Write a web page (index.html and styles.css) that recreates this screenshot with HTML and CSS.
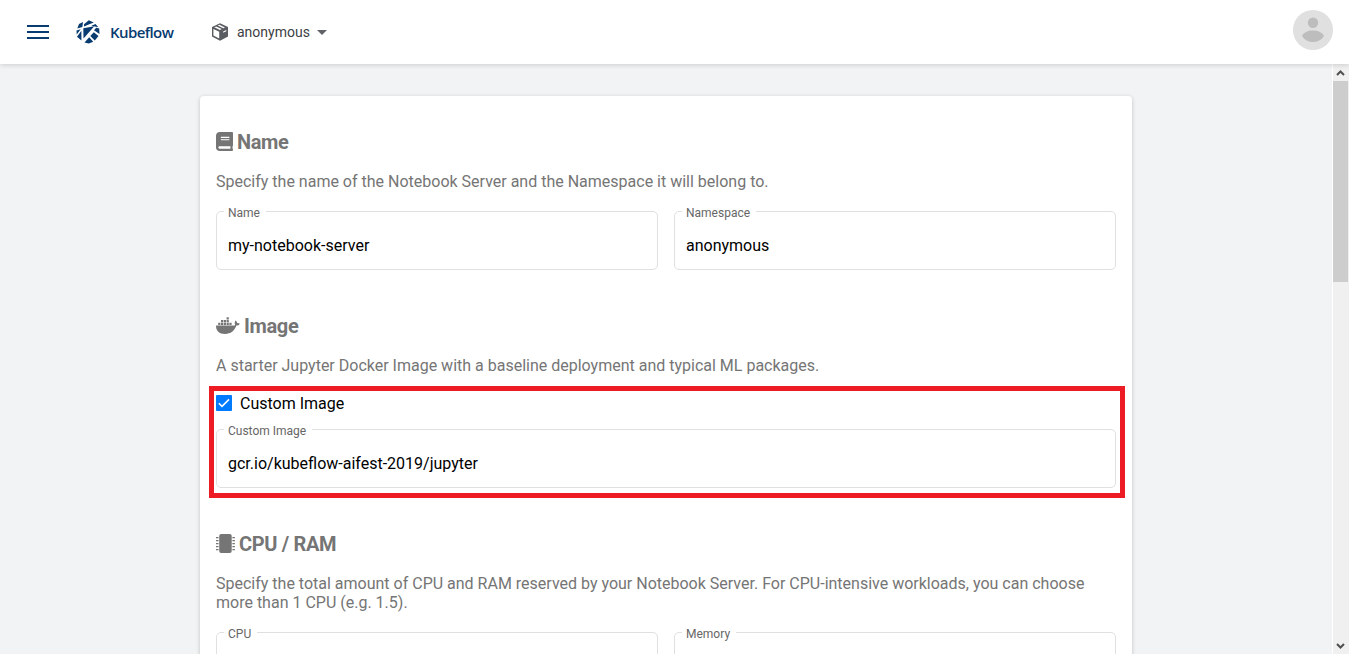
FILE: index.html
```html
<!DOCTYPE html>
<html lang="en">
<head>
<meta charset="utf-8">
<title>Kubeflow</title>
<link rel="stylesheet" href="styles.css">
</head>
<body>
<header class="topbar">
  <svg class="menu" width="22" height="16" viewBox="0 0 22 16" fill="#083b70"><path d="M0 1h22v2H0zM0 7h22v2H0zM0 13h22v2H0z"/></svg>
  <svg class="logo" width="24" height="24" viewBox="0 0 24 24">
    <path fill="#083b70" d="M8 4.200 12.800.300 17.800 2.600 13.300 4.200 8 6.500zM7 2l-.6 5L1.300 8.400 3 4zM.5 10.500l4.200-1.300L.7 14.500zM7.300 8.300 18.300 6.200 7.500 18.500zM19.500 4l2.800 3.300-7-1.600zM20.200 7.700l3 .8.300 5.500-5.500-3.700zM5.400 10.800v9.700L1 16.800zM17.800 12.300l4.700 3.700-3.700 4.500-4.500-4.500zM13.200 17.300l4 4.400-4.400 1.800-4.300-.9z"/>
  </svg>
  <span class="brand">Kubeflow</span>
  <svg class="cube" width="18" height="18" viewBox="0 0 18 18">
    <path fill="#5a5d61" d="M9 .3 17 4v9.600L9 17.700 1 13.600V4z"/>
    <path fill="#fff" d="M2.400 6 8.200 8.700v6.800l-5.800-3zM3.300 4.300l1.900-.9 5.500 2.700L9 7.100zM6.700 2.600l1.700-.8L14 4.400l-1.700.9z"/>
    <path fill="#fff" d="M12.200 8.600 15.300 7v1.200l-3.100 1.500z"/>
  </svg>
  <span class="namespace">anonymous</span>
  <span class="caret"></span>
  <svg class="avatar" width="40" height="40" viewBox="0 0 40 40"><circle cx="20" cy="20" r="20" fill="#e0e0e0"/><circle cx="20" cy="12.800" r="5.200" fill="#bdbdbd"/><path fill="#bdbdbd" d="M9 26c1.600-3.600 6-5.500 11-5.500s9.400 1.900 11 5.500c-2.500 4-6.500 6-11 6s-8.500-2-11-6z"/></svg>
</header>
<div class="body">
  <main class="page">
    <div class="card">
      <section>
        <h3><svg width="17" height="19" viewBox="0 0 448 512" preserveAspectRatio="none"><path fill="currentColor" d="M448 360V24c0-13.300-10.700-24-24-24H96C43 0 0 43 0 96v320c0 53 43 96 96 96h328c13.300 0 24-10.700 24-24v-16c0-7.500-3.500-14.300-8.900-18.700-4.200-15.400-4.200-59.300 0-74.700 5.400-4.300 8.900-11.100 8.900-18.600zM128 134c0-3.300 2.700-6 6-6h212c3.300 0 6 2.700 6 6v20c0 3.300-2.700 6-6 6H134c-3.300 0-6-2.700-6-6v-20zm0 64c0-3.300 2.700-6 6-6h212c3.300 0 6 2.700 6 6v20c0 3.300-2.700 6-6 6H134c-3.300 0-6-2.700-6-6v-20zm253.400 250H96c-17.700 0-32-14.300-32-32 0-17.600 14.400-32 32-32h285.400c-1.900 17.100-1.900 46.900 0 64z"/></svg>Name</h3>
        <p>Specify the name of the Notebook Server and the Namespace it will belong to.</p>
        <div class="row">
          <fieldset><legend>Name</legend><div class="value">my-notebook-server</div></fieldset>
          <fieldset><legend>Namespace</legend><div class="value">anonymous</div></fieldset>
        </div>
      </section>
      <section>
        <h3><svg width="24" height="18" viewBox="0 0 24 18" fill="currentColor"><path d="M0 8.500h17.300c1 0 1.500-.3 1.900-.6-.8-1.300-.6-3.200.4-4.400 1 .7 1.500 1.700 1.600 2.700 1-.2 1.900 0 2.600.5-.6 1.300-1.800 1.900-3.500 1.900C18.500 14 14.800 17 9 17 3 17 0 14 0 8.500z"/><path d="M2.200 5.700h2.200V8H2.200zM5 5.700h2.200V8H5zM7.800 5.700H10V8H7.800zM10.600 5.700h2.200V8h-2.200zM13.400 5.700h2.200V8h-2.200zM5 3h2.200v2.200H5zM7.800 3H10v2.200H7.800zM10.600 3h2.200v2.200h-2.200zM10.600.300h2.200v2.200h-2.200z"/></svg>Image</h3>
        <p>A starter Jupyter Docker Image with a baseline deployment and typical ML packages.</p>
        <div class="check"><svg width="16" height="16" viewBox="0 0 16 16"><rect width="16" height="16" rx="1" fill="#007bff"/><path d="M2.800 8.200 6 11.400l7-7" fill="none" stroke="#fff" stroke-width="1.500"/></svg>Custom Image</div>
        <div class="row">
          <fieldset><legend>Custom Image</legend><div class="value">gcr.io/kubeflow-aifest-2019/jupyter</div></fieldset>
        </div>
      </section>
      <section>
        <h3><svg width="19" height="19" viewBox="0 0 19 19" fill="currentColor"><rect x="3.200" y="0" width="12.500" height="19" rx="2"/><path d="M0 3h2.500v1.200H0zM0 6h2.500v1.200H0zM0 9h2.500v1.200H0zM0 12h2.500v1.200H0zM0 15h2.500v1.200H0zM16.400 3h2.500v1.200h-2.500zM16.400 6h2.500v1.200h-2.500zM16.400 9h2.500v1.200h-2.500zM16.400 12h2.500v1.200h-2.500zM16.400 15h2.500v1.200h-2.500z"/></svg>CPU / RAM</h3>
        <p>Specify the total amount of CPU and RAM reserved by your Notebook Server. For CPU-intensive workloads, you can choose more than 1 CPU (e.g. 1.5).</p>
        <div class="row">
          <fieldset><legend>CPU</legend><div class="value"></div></fieldset>
          <fieldset><legend>Memory</legend><div class="value"></div></fieldset>
        </div>
      </section>
      <div class="highlight"></div>
    </div>
  </main>
  <div class="scrollbar">
    <svg width="15" height="16" viewBox="0 0 15 16"><path d="M4 10 7.500 6.500 11 10" fill="none" stroke="#505050" stroke-width="2"/></svg>
    <div class="thumb"></div>
    <svg width="15" height="16" viewBox="0 0 15 16"><path d="M4 6l3.500 3.500L11 6" fill="none" stroke="#505050" stroke-width="2"/></svg>
  </div>
</div>
</body>
</html>
```
FILE: styles.css
```css
* { box-sizing: border-box; }
body {
  margin: 0;
  height: 654px;
  overflow: hidden;
  display: flex;
  flex-direction: column;
  font: 16px/19px Roboto, sans-serif;
  color: #000;
}
svg { flex: none; display: block; }
.topbar {
  height: 64px;
  flex: none;
  display: flex;
  align-items: center;
  padding: 0 16px 0 27px;
  background: #fff;
  box-shadow: 0 1px 5px rgba(0, 0, 0, .16);
  position: relative;
  z-index: 1;
}
.logo { margin-left: 27px; }
.brand {
  margin-left: 10px;
  width: 65px;
  font: 600 15px/20px "Open Sans", sans-serif;
  letter-spacing: -.6px;
  color: #083b70;
}
.cube { margin-left: 36px; }
.namespace { margin-left: 8px; font-size: 14px; color: #3c4043; }
.caret {
  margin-left: 7px;
  border: 5px solid transparent;
  border-top-color: #5f6368;
  border-bottom: 0;
}
.avatar { margin-left: auto; position: relative; top: -2px; }
.body { flex: 1; min-height: 0; display: flex; background: #f1f3f4; }
.page { flex: 1; overflow: hidden; padding: 32px 200px 0; }
.card {
  position: relative;
  height: 1000px;
  padding: 34px 16px;
  border-radius: 4px;
  background: #fff;
  box-shadow: 0 1px 4px rgba(0, 0, 0, .2);
}
section { margin-bottom: 44px; }
h3 {
  margin: 0;
  height: 24px;
  display: flex;
  align-items: center;
  gap: 4px;
  font-size: 20px;
  line-height: 24px;
  letter-spacing: -.35px;
  font-weight: 700;
  color: #757575;
}
h3 svg { margin-top: -1px; }
p { margin: 18px 0 14px; color: #757575; }
.row { display: flex; gap: 16px; }
fieldset {
  flex: 1;
  min-width: 0;
  height: 65px;
  margin: 0;
  padding: 0 11px 0 7px;
  border: 1px solid #e0e0e0;
  border-radius: 5px;
}
legend {
  height: 13px;
  padding: 0 6px 0 4px;
  font-size: 12px;
  line-height: 17px;
  color: #666;
}
.value { padding: 18px 0 0 4px; }
.check { height: 24px; margin: 16px 0 8px; display: flex; align-items: center; gap: 8px; }
.highlight {
  position: absolute;
  left: 9px;
  top: 290px;
  width: 916px;
  height: 112px;
  border: 5px solid #ed1c24;
}
.scrollbar {
  width: 17px;
  padding-top: 1px;
  border-left: 1px solid #fff;
  background: #f0f0f0;
  display: flex;
  flex-direction: column;
}
.thumb { height: 201px; margin: 0 1px auto 0; background: #cdcdcd; }
```
